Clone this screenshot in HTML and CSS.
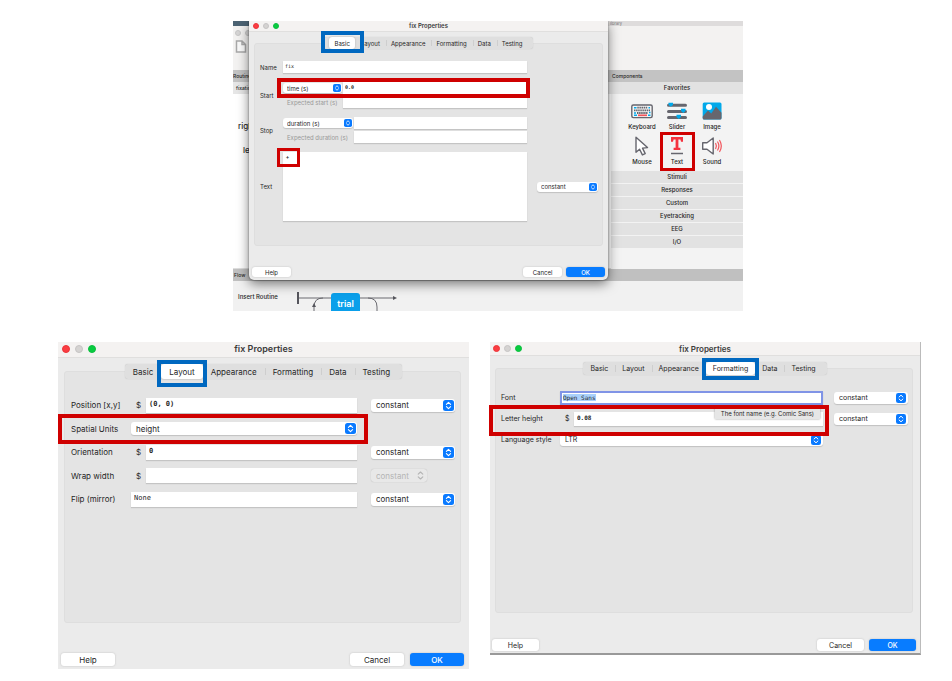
FILE: index.html
```html
<!DOCTYPE html>
<html lang="en">
<head>
<meta charset="utf-8">
<title>fix Properties</title>
<link rel="stylesheet" href="styles.css">
</head>
<body>
<svg class="defs" aria-hidden="true">
  <symbol id="chip" viewBox="0 0 11 11">
    <rect width="11" height="11" rx="2.5" fill="#0a7aff"/>
    <path d="M3.4 4.4 5.5 2.4 7.6 4.4M3.4 6.6 5.5 8.6 7.6 6.6" fill="none" stroke="#fff" stroke-width="1.1" stroke-linecap="round" stroke-linejoin="round"/>
  </symbol>
  <symbol id="chip-off" viewBox="0 0 11 11">
    <path d="M3.2 4.2 5.5 2 7.8 4.2M3.2 6.8 5.5 9 7.8 6.8" fill="none" stroke="#b4b4b4" stroke-width="1.1" stroke-linecap="round" stroke-linejoin="round"/>
  </symbol>
</svg>

<main class="page">
  <section class="builder">
    <div class="builder-title"><span class="desk"></span><span class="builder-name">library</span></div>
    <div class="toolbar">
      <div class="dots"><i></i><i></i></div>
      <svg class="doc" viewBox="0 0 12 13"><path d="M1.5 1h5.5l3.5 3.5V12h-9zM7 1v3.5h3.5" fill="#fafafa" stroke="#a8a8a8" stroke-width="1.5"/></svg>
    </div>
    <div class="heads"><span class="head-routines">Routines</span><span class="head-components">Components</span></div>
    <div class="middle">
      <div class="routines">
        <div class="routine-tab">fixation</div>
        <p>right</p>
        <p class="second">left</p>
      </div>
      <div class="components">
        <h2 class="category">Favorites</h2>
        <div class="favorites">
          <button class="component"><svg viewBox="0 0 24 20"><rect x="1.8" y="4" width="20.4" height="12.6" rx="1.5" fill="#f4f4f4" stroke="#66666e" stroke-width="1.4"/><path d="M4 6.7h2.5M4 12h2M18.5 6.7H20M19 11.5h1.5M4 14.3h3M18 14.3h2.5" stroke="#02a9ea" stroke-width="1.6"/><path d="M7.3 6.7h10.5M4 9.3h16M7 12h11" stroke="#66666e" stroke-width="1.8" stroke-dasharray="1.5 .6"/><path d="M8 14.3h9" stroke="#f2545b" stroke-width="1.7"/></svg>Keyboard</button>
          <button class="component"><svg viewBox="0 0 24 20"><path d="M3.5 4.3h17M3.5 10.4h17M3.5 16.5h17" stroke="#66666e" stroke-width="3" stroke-linecap="round"/><path d="M3.500 1.800h4.500v2.200l-2.200 1.800-2.300-1.800zM16 7.800h4.500v2.300l-2.200 1.800-2.300-1.800zM11.500 13.800h4.500v2.300l-2.200 1.800-2.300-1.800z" fill="#02a9ea"/></svg>Slider</button>
          <button class="component"><svg viewBox="0 0 24 20"><rect x="2.7" y="1.5" width="18.8" height="17" rx="1.5" fill="#02a9ea"/><circle cx="9" cy="6" r="3" fill="#fff"/><path d="M2.7 15.5 8 9.5l3.2 3L16 5.8l5.5 6v5.2a1.5 1.5 0 0 1-1.5 1.5H4.2a1.5 1.5 0 0 1-1.5-1.5z" fill="#66666e"/></svg>Image</button>
          <button class="component"><svg viewBox="0 0 24 20"><path d="M6 1.2v15l3.6-3 2.8 5.7 2.8-1.3-2.7-5.5 5-.5z" fill="#fff" stroke="#66666e" stroke-width="1.4" stroke-linejoin="round"/></svg>Mouse</button>
          <button class="component marked"><svg viewBox="0 0 24 20"><path d="M6 1h12v4.800h-2l-.6-2.200h-2v8.200h2V14H8.600v-2.200h2V3.600h-2L8 5.800H6z" fill="#f5333f"/><path d="M6 17.500h12" stroke="#66666e" stroke-width="1.500"/></svg>Text<span class="mark mark-red"></span></button>
          <button class="component"><svg viewBox="0 0 24 20"><path d="M2.700 6.700h4.300l6.200-4.700v16l-6.200-4.700H2.700z" fill="#fff" stroke="#66666e" stroke-width="1.400" stroke-linejoin="round"/><path d="M15.700 7.500q1.400 2.500 0 5M17.700 6q2.400 4 0 8M19.700 4.500q3.200 5.500 0 11" fill="none" stroke="#f2545b" stroke-width="1.200" stroke-linecap="round"/></svg>Sound</button>
        </div>
        <h2 class="category">Stimuli</h2>
        <h2 class="category">Responses</h2>
        <h2 class="category">Custom</h2>
        <h2 class="category">Eyetracking</h2>
        <h2 class="category">EEG</h2>
        <h2 class="category">I/O</h2>
      </div>
    </div>
    <div class="flow-head">Flow</div>
    <div class="flow">
      <span>Insert Routine</span>
      <svg viewBox="0 0 112 31">
        <path d="M8 17h96M24 31V26q0-9 9-9M87 31V26q0-9-9-9" fill="none" stroke="#6a6a70" stroke-width="1"/>
        <path d="M8 11v12" stroke="#55555c" stroke-width="2"/>
        <path d="M103 15l4 2-4 2zM22 26l2-4 2 4z" fill="#55555c"/>
        <rect x="41" y="12" width="29" height="24" rx="3" fill="#0a9fea"/>
        <text x="55.500" y="26" text-anchor="middle" class="trial">trial</text>
      </svg>
    </div>

    <form class="dialog basic">
      <header class="titlebar"><span class="lights"><i></i><i></i><i></i></span><h1>fix Properties</h1></header>
      <div class="tabs">
        <button type="button" class="tab active">Basic<span class="mark mark-blue"></span></button><button type="button" class="tab">Layout</button><button type="button" class="tab line">Appearance</button><button type="button" class="tab line">Formatting</button><button type="button" class="tab line">Data</button><button type="button" class="tab line">Testing</button>
      </div>
      <div class="panel">
        <div class="row"><label for="b-name">Name</label><div class="field"><input id="b-name" value="fix"></div></div>
        <div class="row">
          <label for="b-start">Start</label>
          <div class="stack start">
            <div class="field"><span class="select"><select aria-label="Start type"><option>time (s)</option></select><svg><use href="#chip"/></svg></span><input id="b-start" class="strong" value="0.0"><span class="mark mark-red"></span></div>
            <div class="field"><label class="hint" for="b-estart">Expected start (s)</label><input id="b-estart"></div>
          </div>
        </div>
        <div class="row">
          <label for="b-stop">Stop</label>
          <div class="stack stop">
            <div class="field"><span class="select"><select aria-label="Stop type"><option>duration (s)</option></select><svg><use href="#chip"/></svg></span><input id="b-stop"></div>
            <div class="field"><label class="hint" for="b-estop">Expected duration (s)</label><input id="b-estop"></div>
          </div>
        </div>
        <div class="row">
          <label for="b-text">Text</label>
          <div class="field"><textarea id="b-text" class="strong">+</textarea><span class="mark mark-red mark-plus"></span></div>
          <span class="select"><select aria-label="Text updates"><option>constant</option></select><svg><use href="#chip"/></svg></span>
        </div>
      </div>
      <footer><button type="button">Help</button><button type="button">Cancel</button><button type="button" class="ok">OK</button></footer>
    </form>
  </section>

  <section class="pair">
    <form class="dialog layout">
      <header class="titlebar"><span class="lights"><i></i><i></i><i></i></span><h1>fix Properties</h1></header>
      <div class="tabs">
        <button type="button" class="tab">Basic</button><button type="button" class="tab active">Layout<span class="mark mark-blue"></span></button><button type="button" class="tab">Appearance</button><button type="button" class="tab line">Formatting</button><button type="button" class="tab line">Data</button><button type="button" class="tab line">Testing</button>
      </div>
      <div class="panel">
        <div class="row"><label for="l-pos">Position [x,y]</label><div class="field"><span class="code">$</span><input id="l-pos" class="strong" value="(0, 0)"></div><span class="select"><select aria-label="Position updates"><option>constant</option></select><svg><use href="#chip"/></svg></span></div>
        <div class="row"><label for="l-units">Spatial Units</label><div class="field"><span class="select wide"><select id="l-units"><option>height</option></select><svg><use href="#chip"/></svg></span></div><span class="mark mark-red"></span></div>
        <div class="row"><label for="l-ori">Orientation</label><div class="field"><span class="code">$</span><input id="l-ori" class="strong" value="0"></div><span class="select"><select aria-label="Orientation updates"><option>constant</option></select><svg><use href="#chip"/></svg></span></div>
        <div class="row"><label for="l-wrap">Wrap width</label><div class="field"><span class="code">$</span><input id="l-wrap"></div><span class="select off"><select aria-label="Wrap width updates" disabled><option>constant</option></select><svg><use href="#chip-off"/></svg></span></div>
        <div class="row"><label for="l-flip">Flip (mirror)</label><div class="field"><input id="l-flip" value="None"></div><span class="select"><select aria-label="Flip updates"><option>constant</option></select><svg><use href="#chip"/></svg></span></div>
      </div>
      <footer><button type="button">Help</button><button type="button">Cancel</button><button type="button" class="ok">OK</button></footer>
    </form>

    <form class="dialog formatting">
      <header class="titlebar"><span class="lights"><i></i><i></i><i></i></span><h1>fix Properties</h1></header>
      <div class="tabs">
        <button type="button" class="tab">Basic</button><button type="button" class="tab line">Layout</button><button type="button" class="tab line">Appearance</button><button type="button" class="tab active">Formatting<span class="mark mark-blue"></span></button><button type="button" class="tab">Data</button><button type="button" class="tab line">Testing</button>
      </div>
      <div class="panel">
        <div class="row"><label id="f-font-label">Font</label><div class="field"><div class="editing" role="textbox" aria-labelledby="f-font-label" contenteditable="true"><mark>Open Sans</mark></div></div><span class="select"><select aria-label="Font updates"><option>constant</option></select><svg><use href="#chip"/></svg></span></div>
        <div class="row"><label for="f-height">Letter height</label><div class="field"><span class="code">$</span><input id="f-height" class="strong" value="0.08"><span class="tooltip" role="tooltip">The font name (e.g. Comic Sans)</span></div><span class="select"><select aria-label="Letter height updates"><option>constant</option></select><svg><use href="#chip"/></svg></span><span class="mark mark-red"></span></div>
        <div class="row"><label for="f-lang">Language style</label><div class="field"><span class="select wide"><select id="f-lang"><option>LTR</option></select><svg><use href="#chip"/></svg></span></div></div>
      </div>
      <footer><button type="button">Help</button><button type="button">Cancel</button><button type="button" class="ok">OK</button></footer>
    </form>
  </section>
</main>
</body>
</html>
```
FILE: styles.css
```css
* { box-sizing: border-box; }

body {
  margin: 0;
  background: #fff;
  color: #262626;
  font-family: Inter, "Liberation Sans", sans-serif;
}

h1, h2, p { margin: 0; }
button, input, select, textarea { font: inherit; color: inherit; margin: 0; border: 0; border-radius: 0; outline: 0; }
.defs { position: absolute; width: 0; height: 0; }

.page {
  display: grid;
  grid-template-columns: 175fr 510fr 178fr;
  row-gap: 31px;
  padding: 21px 31px 12px 58px;
}

/* Annotation frames laid over controls */
.mark { position: absolute; z-index: 3; pointer-events: none; }
.mark-red { border: 4px solid #cf0000; }
.mark-blue { border: 4px solid #0068c0; }

/* Builder window */
.builder {
  position: relative;
  grid-column: 2;
  overflow: hidden;
  background: #f1f1f1;
  font-size: 6px;
}
.builder-title { display: flex; height: 5px; background: #dedcdc; }
.desk { flex: 0 0 377px; background: linear-gradient(90deg, #4c6373 340px, #dedcdc 340px); }
.builder-name { line-height: 5px; color: #777; font-size: 4px; }
.toolbar { height: 44px; padding: 4px 2px; background: #f3f2f1; }
.dots { display: flex; gap: 4px; }
.dots i { width: 6px; height: 6px; border-radius: 50%; background: #d6d5d5; border: 1px solid #c6c6c6; }
.doc { display: block; width: 12px; height: 13px; margin-top: 4px; }
.heads { display: flex; justify-content: space-between; height: 12px; line-height: 12px; background: #c3c3c3; font-size: 5px; font-weight: 500; }
.head-components { width: 131px; }
.middle { display: flex; justify-content: space-between; height: 187px; }
.routines { flex: 1; background: #fff; border-bottom: 1px solid #ddd; font-size: 8px; font-weight: 500; }
.routine-tab { height: 12px; padding-left: 3px; line-height: 12px; background: #e6e6e6; font-size: 5px; font-weight: 500; }
.routines p { padding: 26px 0 0 5px; line-height: 12px; }
.routines .second { padding: 12px 0 0 10px; }
.components { width: 132px; background: #f3f3f3; }
.category {
  height: 12px;
  margin-bottom: 1px;
  background: #e2e2e2;
  font-size: 6px;
  font-weight: 500;
  line-height: 12px;
  text-align: center;
}
.favorites { display: grid; grid-template-columns: repeat(3, 35px); justify-content: center; padding: 5px 0 1px; }
.component {
  position: relative;
  display: flex;
  flex-direction: column;
  align-items: center;
  gap: 2px;
  height: 35px;
  padding: 1px 0;
  background: none;
  font-size: 6px;
  font-weight: 500;
  line-height: 8px;
}
.component svg { width: 24px; height: 20px; }
.component .mark { inset: -3px 0 -1px; border-width: 3px; }
.flow-head { height: 12px; padding-left: 1px; line-height: 12px; background: #c0c0c0; font-size: 5px; font-weight: 500; }
.flow { display: flex; align-items: center; gap: 12px; height: 30px; padding-left: 5px; font-weight: 500; }
.flow svg { width: 112px; height: 31px; }
.trial { fill: #fff; font-size: 9px; font-weight: 600; }

/* Property dialogs */
.dialog {
  display: flex;
  flex-direction: column;
  min-width: 0;
  background: #ebebeb;
}
.titlebar { display: grid; grid-template-columns: 1fr auto 1fr; align-items: center; background: #f4f2f1; border-bottom: 1px solid #e0dfde; }
.titlebar h1 { font-size: inherit; font-weight: 600; color: #3c3c3c; line-height: 1; }
.lights { display: flex; }
.lights i { border-radius: 50%; background: #d5d3d2; border: 1px solid #c6c4c4; }
.lights i:first-child { background: #fb3d42; border-color: #ec3338; }
.lights i:last-child { background: #08cc40; border-color: #0bbd3e; }

.tabs { position: relative; z-index: 1; display: flex; align-self: center; border-radius: 3px; background: #dfdfdf; box-shadow: 0 0 1px #bbb; }
.tab { position: relative; display: flex; align-items: center; background: none; border-radius: 3px; white-space: nowrap; }
.tab.active { background: #fff; box-shadow: 0 0 2px #aaa; }
.tab.line::before { content: ""; position: absolute; left: 0; top: 25%; bottom: 25%; border-left: 1px solid #cecece; }

.panel { flex: 1; border: 1px solid #dedede; border-radius: 3px; background: #e4e4e4; }
.row { position: relative; display: grid; align-items: center; }
.row label { white-space: nowrap; }
.field { position: relative; display: flex; align-items: center; min-width: 0; }
input, textarea, .editing {
  flex: 1;
  min-width: 0;
  display: block;
  padding: 0 3px;
  background: #fff;
  box-shadow: 0 1px 1px #c4c4c4;
  font-family: "DejaVu Sans Mono", monospace;
  resize: none;
}
.strong { font-weight: 700; }
.select { position: relative; display: flex; align-items: center; }
.select.wide { flex: 1; }
.select select { width: 100%; appearance: none; background: #fff; border-radius: 3px; box-shadow: 0 1px 1px #c0c0c0; }
.select svg { position: absolute; pointer-events: none; }
.select.off select { background: #e8e8e8; color: #b4b4b4; opacity: 1; box-shadow: 0 0 1px #aaa; }
footer { display: flex; }
footer button { padding: 0; border-radius: 3px; background: #fff; box-shadow: 0 0 2px #bbb; }
footer button:first-child { margin-right: auto; }
footer .ok { background: #087cff; color: #fff; font-weight: 500; }

/* Basic tab */
.basic {
  position: absolute;
  top: 0;
  left: 16px;
  right: 135px;
  bottom: 31px;
  z-index: 2;
  border-radius: 0 0 5px 5px;
  box-shadow: 0 4px 12px rgba(0, 0, 0, .5), 0 0 2px rgba(0, 0, 0, .5);
  font-size: 6px;
}
.basic .titlebar { height: 11px; }
.basic .lights { gap: 4px; padding-left: 4px; }
.basic .lights i { width: 6px; height: 6px; }
.basic .tabs { gap: 1px; height: 12px; margin-top: 5px; padding: 0 5px; }
.basic .tab { padding: 0 5px; }
.basic .tab .mark { inset: -6px -9px -4px -8px; }
.basic .panel { display: flex; flex-direction: column; gap: 9px; margin: -6px 5px 0; padding: 17px 4px 0 5px; }
.basic .row { grid-template-columns: 23px 1fr 71px; }
.basic .row > .select { margin-left: 10px; }
.basic .stack { display: grid; gap: 2px; }
.basic .field .select, .basic .hint { flex: none; margin-right: 1px; }
.basic .start .select, .basic .start .hint { width: 59px; }
.basic .stop .select, .basic .stop .hint { width: 70px; }
.basic .hint { padding-left: 4px; color: #999; }
.basic input { height: 12px; padding: 0 2px 2px; font-size: 5px; }
.basic textarea { height: 69px; padding: 2px 3px; font-size: 5px; }
.basic select { height: 10px; padding: 0 4px; }
.basic .select svg { right: 1px; width: 8px; height: 8px; }
.basic .field .mark { inset: -4px -3px -4px -6px; }
.basic .field .mark-plus { inset: -4px auto auto -6px; width: 23px; height: 19px; border-width: 3px; }
.basic footer { gap: 4px; padding: 21px 3px 3px; }
.basic footer button { width: 39px; height: 10px; }

/* Layout and Formatting tabs */
.pair { grid-column: 1 / -1; display: grid; grid-template-columns: 411fr 431fr; align-items: start; gap: 21px; }

.layout { font-size: 8px; }
.layout .titlebar { height: 16px; padding-bottom: 2px; }
.layout .titlebar h1 { font-size: 9px; }
.layout .lights { gap: 5px; padding: 0 4px; }
.layout .lights i { width: 8px; height: 8px; }
.layout .tabs { height: 15px; margin-top: 6px; padding-right: 4px; }
.layout .tab { padding: 0 8px; }
.layout .tab .mark { inset: -4px -4px -8px; }
.layout .panel {
  display: grid;
  grid-template-rows: repeat(2, 24px 23px) 24px;
  min-height: 252px;
  margin: -8px 8px 0 6px;
  padding: 21px 5px 0 6px;
}
.layout .row { grid-template-columns: 60px 1fr 98px; }
.layout .row > .select { width: 84px; margin-left: 14px; }
.layout .row > .off { width: 56px; }
.layout .row > .mark { inset: -3px 87px -4px -13px; }
.layout .code { width: 15px; padding-left: 5px; }
.layout input { height: 15px; padding-bottom: 3px; font-size: 7px; }
.layout select { height: 13px; padding: 0 5px; }
.layout .select svg { right: 1px; width: 11px; height: 11px; }
.layout footer { gap: 6px; padding: 30px 5px 3px 3px; }
.layout footer button { width: 54px; height: 13px; }

.formatting { border-right: 1px solid #bbb; border-bottom: 2px solid #999; font-size: 7px; }
.formatting .titlebar { height: 14px; }
.formatting .titlebar h1 { font-size: 8px; }
.formatting .lights { gap: 4px; padding: 0 3px; }
.formatting .lights i { width: 7px; height: 7px; }
.formatting .tabs { height: 13px; margin-top: 6px; padding-right: 4px; }
.formatting .tab { padding: 0 7px; }
.formatting .tab .mark { inset: -4px -4px -5px; }
.formatting .panel { min-height: 245px; margin: -7px 7px 0 5px; padding: 18px 4px 0 5px; }
.formatting .row { grid-template-columns: 59px 1fr 85px; height: 21px; }
.formatting .row > .select { width: 74px; margin-left: 11px; }
.formatting .row > .mark { inset: -3px 79px -7px -12px; }
.formatting .row:nth-child(3) { z-index: 0; }
.formatting .row:nth-child(2) { z-index: 1; }
.formatting .code { width: 14px; padding-left: 5px; }
.formatting input, .editing { height: 14px; padding-bottom: 3px; font-size: 6px; }
.editing { border: 2px solid #8094e6; padding: 0 1px; line-height: 9px; }
.editing mark { background: #a9d0fb; color: inherit; }
.formatting select { height: 12px; padding: 0 5px; }
.formatting .select svg { right: 2px; width: 10px; height: 10px; }
.formatting footer { gap: 5px; padding: 26px 4px 2px 2px; }
.formatting footer button { width: 47px; height: 12px; }
.tooltip {
  position: absolute;
  z-index: 2;
  top: -5px;
  right: 3px;
  padding: 1px 6px 0;
  background: #e6e6e6;
  box-shadow: 0 0 2px #999;
  font-size: 6px;
  line-height: 11px;
  white-space: nowrap;
}
```
